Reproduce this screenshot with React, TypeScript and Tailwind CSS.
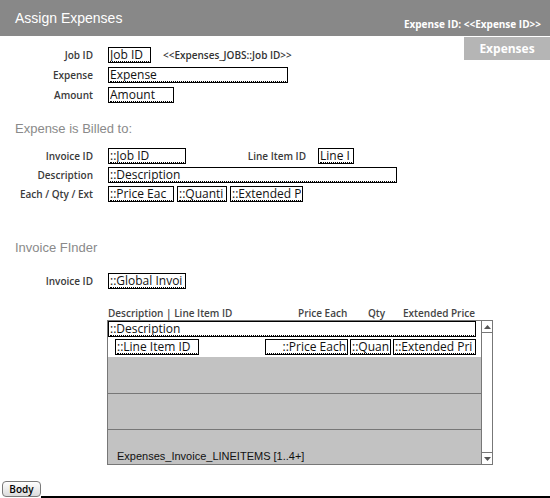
import React from 'react';

const FIELD_FONT = { fontFamily: '"Open Sans", "DejaVu Sans", sans-serif' };

interface FieldProps {
  text: string;
  width: string;
  right?: boolean;
}

// FileMaker style edit box: thin black frame, dotted baseline under the text
const Field: React.FC<FieldProps> = ({ text, width, right }) => (
  <div className={`${width} h-[16px] shrink-0 border border-black bg-white px-[1px] overflow-hidden`}>
    <div
      className={`h-[14px] border-b border-dotted border-black text-[12px] leading-[13px] text-[#111] whitespace-nowrap overflow-hidden ${right ? 'text-right' : ''}`}
      style={FIELD_FONT}
    >
      {text}
    </div>
  </div>
);

const Label: React.FC<{ children: React.ReactNode; width?: string }> = ({ children, width = 'w-[93px]' }) => (
  <span className={`${width} shrink-0 text-right text-[10px] font-semibold text-[#3a3a3a] leading-[12px]`}>
    {children}
  </span>
);

const Row: React.FC<{ label: string; children: React.ReactNode }> = ({ label, children }) => (
  <div className="flex items-center h-[16px]">
    <Label>{label}</Label>
    <div className="ml-[15px] flex items-center">{children}</div>
  </div>
);

export default function App() {
  return (
    <div
      className="w-[550px] h-[498px] bg-white flex flex-col overflow-hidden"
      style={{ fontFamily: '"Open Sans", "DejaVu Sans", sans-serif' }}
    >
      {/* Header */}
      <div className="h-[36px] shrink-0 bg-[#888888] flex items-start justify-between pl-[15px] pr-[9px]">
        <span className="mt-[10px] text-[14px] leading-[16px] text-white" style={{ fontFamily: '"Liberation Sans", Arial, sans-serif' }}>
          Assign Expenses
        </span>
        <span className="mt-[18px] text-[10px] leading-[12px] font-bold text-white">
          Expense ID: &lt;&lt;Expense ID&gt;&gt;
        </span>
      </div>

      {/* Expense fields + tab button */}
      <div className="flex">
        <div className="flex-1 pt-[11px] flex flex-col gap-[4px]">
          <Row label="Job ID">
            <Field text="Job ID" width="w-[43px]" />
            <span className="ml-[12px] text-[10px] font-semibold text-[#333]">&lt;&lt;Expenses_JOBS::Job ID&gt;&gt;</span>
          </Row>
          <Row label="Expense">
            <Field text="Expense" width="w-[180px]" />
          </Row>
          <Row label="Amount">
            <Field text="Amount" width="w-[66px]" />
          </Row>
        </div>
        <div className="w-[86px] h-[23px] mt-[1px] bg-[#b5b5b5] flex items-center justify-center text-[12px] font-bold text-white">
          Expenses
        </div>
      </div>

      {/* Billed to */}
      <div
        className="mt-[18px] pl-[15px] text-[13px] leading-[16px] text-[#8a8a8a]"
        style={{ fontFamily: '"Liberation Sans", Arial, sans-serif' }}
      >
        Expense is Billed to:
      </div>
      <div className="mt-[11px] flex flex-col gap-[3px]">
        <Row label="Invoice ID">
          <Field text="::Job ID" width="w-[78px]" />
          <Label width="w-[120px]">Line Item ID</Label>
          <div className="ml-[12px]">
            <Field text="Line I" width="w-[36px]" />
          </div>
        </Row>
        <Row label="Description">
          <Field text="::Description" width="w-[289px]" />
        </Row>
        <Row label="Each / Qty / Ext">
          <div className="flex gap-[3px]">
            <Field text="::Price Eac" width="w-[66px]" />
            <Field text="::Quanti" width="w-[50px]" />
            <Field text="::Extended P" width="w-[73px]" />
          </div>
        </Row>
      </div>

      {/* Invoice finder */}
      <div
        className="mt-[38px] pl-[15px] text-[13px] leading-[16px] text-[#8a8a8a]"
        style={{ fontFamily: '"Liberation Sans", Arial, sans-serif' }}
      >
        Invoice FInder
      </div>
      <div className="mt-[17px]">
        <Row label="Invoice ID">
          <Field text="::Global Invoi" width="w-[78px]" />
        </Row>
      </div>

      {/* Portal column headers */}
      <div className="mt-[18px] flex text-[10px] leading-[12px] font-semibold text-[#444]">
        <span className="ml-[108px] w-[190px]">Description | Line Item ID</span>
        <span className="w-[70px]">Price Each</span>
        <span className="w-[35px]">Qty</span>
        <span>Extended Price</span>
      </div>

      {/* Portal */}
      <div className="mt-[1px] ml-[107px] w-[386px] h-[145px] border border-[#777] flex">
        <div className="flex-1 flex flex-col">
          <div className="h-[36px] bg-white">
            <Field text="::Description" width="w-[368px]" />
            <div className="mt-[2px] flex">
              <div className="ml-[7px]">
                <Field text="::Line Item ID" width="w-[84px]" />
              </div>
              <div className="ml-[66px] flex gap-[2px]">
                <Field text="::Price Each" width="w-[83px]" right />
                <Field text="::Quan" width="w-[41px]" />
                <Field text="::Extended Pri" width="w-[83px]" />
              </div>
            </div>
          </div>
          <div className="h-[36px] bg-[#c2c2c2]" />
          <div className="h-[36px] bg-[#c2c2c2] border-t border-[#777]" />
          <div className="flex-1 bg-[#c2c2c2] border-t border-[#777] flex items-end pl-[9px] pb-[1px]">
            <span className="text-[11px] leading-[14px] text-[#111]" style={{ fontFamily: '"Liberation Sans", Arial, sans-serif' }}>
              Expenses_Invoice_LINEITEMS [1..4+]
            </span>
          </div>
        </div>
        {/* Scroll bar */}
        <div className="w-[11px] border-l border-[#777] flex flex-col bg-white">
          <div className="h-[12px] border-b border-[#777] flex items-center justify-center">
            <svg width="7" height="4" viewBox="0 0 7 4"><path d="M3.5 0 L7 4 L0 4 Z" fill="#555" /></svg>
          </div>
          <div className="flex-1" />
          <div className="h-[12px] border-t border-[#777] flex items-center justify-center">
            <svg width="7" height="4" viewBox="0 0 7 4"><path d="M0 0 L7 0 L3.5 4 Z" fill="#555" /></svg>
          </div>
        </div>
      </div>

      {/* Layout part tab */}
      <div className="mt-auto flex items-end h-[18px]">
        <div className="ml-[2px] mb-[1px] w-[39px] h-[16px] rounded-[4px] border border-[#7a7a7a] bg-gradient-to-b from-white to-[#dcdcdc] flex items-center justify-center text-[10px] font-semibold text-black">
          Body
        </div>
        <div className="flex-1 h-[2px] bg-black" />
      </div>
    </div>
  );
}
